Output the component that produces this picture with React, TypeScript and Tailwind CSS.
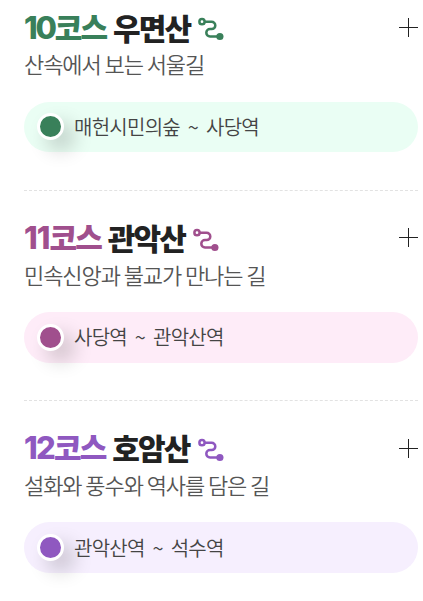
type Course = {
  no: string;
  name: string;
  desc: string;
  from: string;
  to: string;
  text: string;
  dot: string;
  pill: string;
  tracking: string;
};

const courses: Course[] = [
  { no: '10', name: '우면산', desc: '산속에서 보는 서울길', from: '매헌시민의숲', to: '사당역', text: 'text-[#39805a]', dot: 'bg-[#39805a]', pill: 'bg-[#eafef4]', tracking: 'tracking-[-0.07em]' },
  { no: '11', name: '관악산', desc: '민속신앙과 불교가 만나는 길', from: '사당역', to: '관악산역', text: 'text-[#a04f8d]', dot: 'bg-[#a04f8d]', pill: 'bg-[#feecf8]', tracking: 'tracking-[-0.03em]' },
  { no: '12', name: '호암산', desc: '설화와 풍수와 역사를 담은 길', from: '관악산역', to: '석수역', text: 'text-[#8f58c0]', dot: 'bg-[#8f58c0]', pill: 'bg-[#f6effe]', tracking: 'tracking-[-0.055em]' },
];

function RouteIcon() {
  return (
    <svg className="mt-[5px] ml-2 h-6 w-[26px] shrink-0" viewBox="0 0 26 24" fill="none" stroke="currentColor" strokeWidth="2.5">
      <circle cx="4" cy="4.7" r="2.6" />
      <path d="M6.8 4.7H13.6a3.7 3.7 0 0 1 0 7.4H12a3.7 3.7 0 0 0 0 7.4H20" />
      <circle cx="21.9" cy="19.5" r="3.6" fill="currentColor" stroke="none" />
    </svg>
  );
}

function PlusIcon() {
  return (
    <svg className="mt-[10.3px] h-[19px] w-[19px] shrink-0" viewBox="0 0 19 19" stroke="#222" strokeWidth="1" shapeRendering="crispEdges">
      <path d="M0 9.5H19M9.5 0V19" />
    </svg>
  );
}

function CourseItem({ course }: { course: Course }) {
  return (
    <li className="h-[210.3px] border-b border-dashed border-[#e2e2e2] pt-[27px] last:border-b-0">
      <div className="flex h-[39.5px] items-start justify-between">
        <h2 className="flex h-[38px] items-center text-[30px] leading-[38px] font-black tracking-[-0.06em] whitespace-nowrap text-[#222]">
          <span className={course.text}>
            <span className={`font-['Inter'] text-[31px] font-extrabold ${course.tracking}`}>{course.no}</span>코스
          </span>
          <span className="ml-[6.5px]">{course.name}</span>
          <span className={course.text}>
            <RouteIcon />
          </span>
        </h2>
        <PlusIcon />
      </div>
      <p className="h-[54.5px] text-[22px] leading-[32px] font-[350] tracking-[-0.049em] whitespace-nowrap text-[#555]">{course.desc}</p>
      <div className={`flex h-[50.5px] items-center rounded-full pl-[13px] ${course.pill}`}>
        <span className={`h-[27px] w-[27px] shrink-0 rounded-full border-3 border-white shadow-[10px_10px_20px_rgba(0,0,0,0.2)] ${course.dot}`} />
        <span className="ml-[10px] flex text-[20px] leading-[30px] font-[350] tracking-[-0.037em] whitespace-nowrap text-[#444]">
          <span>{course.from}</span>
          <span className="w-[26px] text-center">~</span>
          <span>{course.to}</span>
        </span>
      </div>
    </li>
  );
}

export default function App() {
  return (
    <main className="h-[601px] overflow-hidden bg-white pr-[5px] pl-6 font-['Noto_Sans_CJK_KR',sans-serif]">
      <ul className="-mt-[19.3px]">
        {courses.map((course) => (
          <CourseItem key={course.no} course={course} />
        ))}
      </ul>
    </main>
  );
}
